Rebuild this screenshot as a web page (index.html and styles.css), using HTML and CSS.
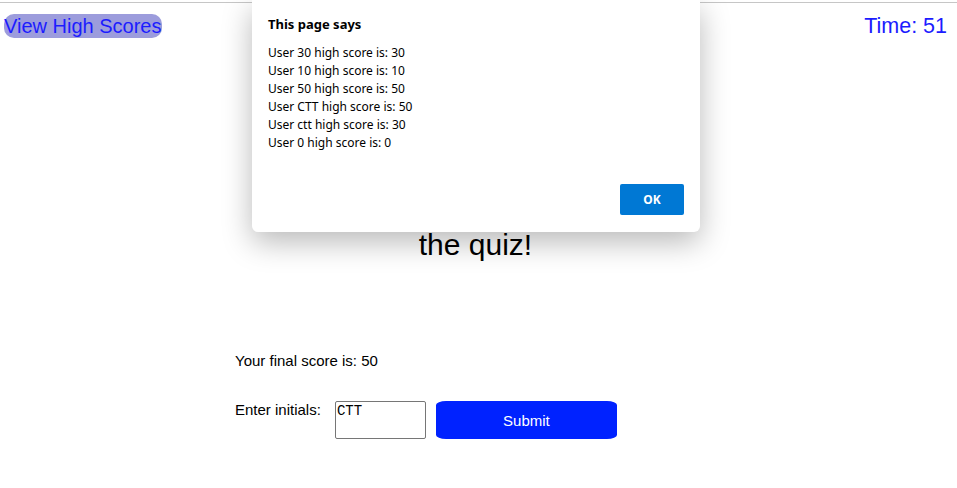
FILE: index.html
```html
<!DOCTYPE html>
<html>
<head>
<meta charset="utf-8">
<link rel="stylesheet" href="styles.css">
</head>
<body>
<div class="topline"></div>
<header class="header">
  <a class="highscores">View High Scores</a>
  <span class="timer">Time: 51</span>
</header>
<main class="main">
  <h1 class="title">All done! You have finished the quiz!</h1>
  <p class="score">Your final score is: 50</p>
  <form class="form">
    <label class="label">Enter initials:</label>
    <textarea class="initials">CTT</textarea>
    <button type="button" class="submit">Submit</button>
  </form>
</main>
<div class="dialog">
  <div class="dialog-title">This page says</div>
  <div class="dialog-body">
    <div>User 30 high score is: 30</div>
    <div>User 10 high score is: 10</div>
    <div>User 50 high score is: 50</div>
    <div>User CTT high score is: 50</div>
    <div>User ctt high score is: 30</div>
    <div>User 0 high score is: 0</div>
  </div>
  <div class="dialog-actions"><button type="button" class="ok">OK</button></div>
</div>
</body>
</html>
```

FILE: styles.css
```css
html, body {
  margin: 0;
  padding: 0;
  background: #fff;
  font-family: "Liberation Sans", Arial, sans-serif;
}
.topline {
  height: 2px;
  border-bottom: 1px solid #c6c6c6;
}
.header {
  display: flex;
  justify-content: space-between;
  align-items: center;
  padding: 11px 10px 0 4px;
}
.highscores {
  font-size: 20px;
  line-height: 24px;
  color: #1c1cff;
  background: #9c9cdc;
  border-radius: 10px;
  padding: 0 1px 0 0;
}
.timer {
  font-size: 21.5px;
  line-height: 24px;
  color: #1c1cff;
}
.main {
  width: 487px;
  margin: 0 auto;
  display: flex;
  flex-direction: column;
}
.title {
  font-size: 30px;
  font-weight: normal;
  text-align: center;
  line-height: 36px;
  margin: 81px 0 0 0;
  padding: 0 180px 0 174px;
  color: #000;
}
.score {
  font-size: 15px;
  margin: 89px 0 0 0;
  line-height: 18px;
}
.form {
  display: flex;
  align-items: flex-start;
  margin-top: 31px;
}
.label {
  font-size: 15px;
  line-height: 18px;
  margin-right: 14px;
}
.initials {
  width: 91px;
  height: 38px;
  box-sizing: border-box;
  border: 1px solid #767676;
  border-radius: 2px;
  padding: 1px 1px;
  font-family: "Liberation Mono", monospace;
  font-size: 14px;
  resize: none;
  margin: 0 10px 0 0;
}
.submit {
  width: 181px;
  height: 38px;
  margin-top: 0;
  background: #0022ff;
  color: #fff;
  border: none;
  border-radius: 10px / 4px;
  font-family: "Liberation Sans", Arial, sans-serif;
  font-size: 15px;
}
.dialog {
  position: absolute;
  left: 252px;
  top: 0;
  width: 448px;
  height: 232px;
  background: #fff;
  border-radius: 0 0 6px 6px;
  box-shadow: 0 10px 30px rgba(0,0,0,0.28);
  box-sizing: border-box;
  padding: 16px 16px 0 16px;
  font-family: "Noto Sans", "Open Sans", sans-serif;
  color: #000;
  display: flex;
  flex-direction: column;
}
.dialog-title {
  font-weight: bold;
  font-size: 13px;
  line-height: 16px;
}
.dialog-body {
  margin-top: 12px;
  font-size: 12px;
  line-height: 18px;
}
.dialog-actions {
  display: flex;
  justify-content: flex-end;
  margin-top: auto;
  padding-bottom: 17px;
}
.ok {
  width: 64px;
  height: 31px;
  background: #0078d4;
  color: #fff;
  border: none;
  border-radius: 2px;
  font-family: "Noto Sans", "Open Sans", sans-serif;
  font-weight: bold;
  font-size: 12px;
}
```
